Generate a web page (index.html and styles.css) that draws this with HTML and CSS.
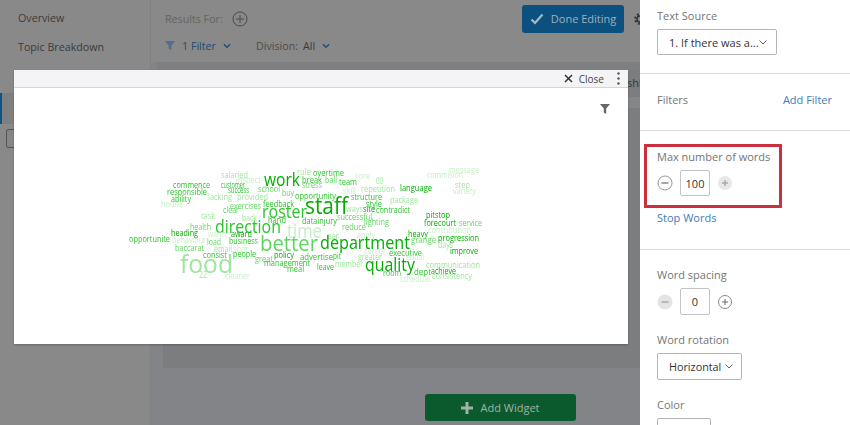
FILE: index.html
```html
<!DOCTYPE html>
<html lang="en">
<head>
<meta charset="utf-8">
<title>Word cloud widget</title>
<link rel="stylesheet" href="styles.css">
</head>
<body>
<div class="app">
  <nav class="sidebar">
    <a class="nav-item">Overview</a>
    <a class="nav-item">Topic Breakdown</a>
    <div class="nav-current"></div>
    <div class="nav-box"></div>
  </nav>
  <main class="main">
    <div class="results-row">
      <span class="results-label">Results For:</span>
      <svg class="results-add" width="16" height="16" viewBox="0 0 16 16"><circle cx="8" cy="8" r="7" fill="none" stroke="#4a4a4a"/><path d="M8 4v8M4 8h8" stroke="#4a4a4a" fill="none"/></svg>
      <button class="done-btn">
        <svg width="14" height="12" viewBox="0 0 14 12"><path d="M1.500 6.500l3.500 3.500 7.500-8.500" fill="none" stroke="#a9b9c4" stroke-width="2.200"/></svg>
        Done Editing
      </button>
      <svg class="gear" width="12" height="12" viewBox="0 0 12 12"><circle cx="6" cy="6" r="3" fill="none" stroke="#333" stroke-width="1.500"/><circle cx="6" cy="6" r="4.800" fill="none" stroke="#333" stroke-width="2" stroke-dasharray="2 1.770"/></svg>
    </div>
    <div class="filter-row">
      <svg width="10" height="9" viewBox="0 0 11 10"><path d="M0 0h11L7 5v5L4 8.500V5z" fill="#4d6f8f"/></svg>
      <span class="filter-count">1 Filter</span>
      <svg class="chev" width="8" height="6" viewBox="0 0 9 6"><path d="M1 1l3.500 3.500L8 1" fill="none" stroke="#1f4d78" stroke-width="1.500"/></svg>
      <span class="division">Division:</span>
      <span class="division-val">All</span>
      <svg class="chev" width="8" height="6" viewBox="0 0 9 6"><path d="M1 1l3.500 3.500L8 1" fill="none" stroke="#1f4d78" stroke-width="1.500"/></svg>
    </div>
    <div class="band"></div>
    <div class="card">
      <span class="card-title">shb</span>
      <div class="card-strip"></div>
    </div>
    <button class="add-btn">
      <svg width="12" height="12" viewBox="0 0 12 12"><path d="M6 0v12M0 6h12" stroke="#9db3a5" stroke-width="3"/></svg>
      Add Widget
    </button>
  </main>
  <aside class="panel">
    <section class="panel-sec sec-source">
      <label class="lbl">Text Source</label>
      <div class="select select-source"><span>1. If there was a...</span><svg width="8" height="5" viewBox="0 0 8 5"><path d="M.5.5L4 4 7.500.5" fill="none" stroke="#666"/></svg></div>
    </section>
    <section class="panel-sec sec-filters">
      <label class="lbl">Filters</label>
      <a class="link">Add Filter</a>
    </section>
    <section class="panel-sec sec-max">
      <div class="highlight">
        <label class="lbl">Max number of words</label>
        <div class="stepper">
          <svg class="step-btn" width="16" height="16" viewBox="0 0 16 16"><circle cx="8" cy="8" r="7" fill="#fff" stroke="#999"/><path d="M4.500 8h7" stroke="#888" stroke-width="1.500"/></svg>
          <div class="num">100</div>
          <svg class="step-btn" width="14" height="14" viewBox="0 0 14 14"><circle cx="7" cy="7" r="7" fill="#e8e8e8"/><path d="M7 4v6M4 7h6" stroke="#aaa" stroke-width="1.500"/></svg>
        </div>
      </div>
      <a class="link stop">Stop Words</a>
    </section>
    <section class="panel-sec sec-style">
      <label class="lbl">Word spacing</label>
      <div class="stepper">
        <svg class="step-btn" width="16" height="16" viewBox="0 0 16 16"><circle cx="8" cy="8" r="7.500" fill="#e4e4e4"/><path d="M4.500 8h7" stroke="#aaa" stroke-width="1.500"/></svg>
        <div class="num">0</div>
        <svg class="step-btn" width="14" height="14" viewBox="0 0 14 14"><circle cx="7" cy="7" r="6.500" fill="#fff" stroke="#888"/><path d="M7 4v6M4 7h6" stroke="#666"/></svg>
      </div>
      <label class="lbl lbl-rot">Word rotation</label>
      <div class="select select-rot"><span>Horizontal</span><svg width="8" height="5" viewBox="0 0 8 5"><path d="M.5.5L4 4 7.500.5" fill="none" stroke="#666"/></svg></div>
      <label class="lbl lbl-color">Color</label>
      <div class="color-box"></div>
    </section>
  </aside>
  <div class="modal">
    <header class="modal-head">
      <svg width="9" height="9" viewBox="0 0 9 9"><path d="M1 1l7 7M8 1L1 8" stroke="#333" stroke-width="1.500"/></svg>
      <span class="close-text">Close</span>
      <svg class="dots" width="3" height="13" viewBox="0 0 3 13"><circle cx="1.500" cy="1.500" r="1.200" fill="#555"/><circle cx="1.500" cy="6.500" r="1.200" fill="#555"/><circle cx="1.500" cy="11.500" r="1.200" fill="#555"/></svg>
    </header>
    <div class="modal-body">
      <svg class="funnel" width="10" height="10" viewBox="0 0 10 10"><path d="M0 0h10L6.200 4.500V10L3.800 8.500V4.500z" fill="#666"/></svg>
      <svg class="cloud" width="614" height="256" viewBox="14 88 614 256" font-size="8.500">
        <text class="w4" x="221" y="178" textLength="27" lengthAdjust="spacingAndGlyphs">salaried</text>
        <text class="w5" x="236" y="183" textLength="25" lengthAdjust="spacingAndGlyphs">inspect</text>
        <text class="w1" x="264" y="186" font-size="18" textLength="36" lengthAdjust="spacingAndGlyphs">work</text>
        <text class="w4" x="297" y="175" textLength="14" lengthAdjust="spacingAndGlyphs">rule</text>
        <text class="w2" x="173" y="188" textLength="37" lengthAdjust="spacingAndGlyphs">commence</text>
        <text class="w2" x="221" y="188" textLength="24" lengthAdjust="spacingAndGlyphs">customer</text>
        <text class="w2" x="228" y="193" textLength="21" lengthAdjust="spacingAndGlyphs">success</text>
        <text class="w3" x="258" y="192" textLength="22" lengthAdjust="spacingAndGlyphs">school</text>
        <text class="w2" x="167" y="195" textLength="40" lengthAdjust="spacingAndGlyphs">responsible</text>
        <text class="w4" x="208" y="200" textLength="24" lengthAdjust="spacingAndGlyphs">lacking</text>
        <text class="w4" x="237" y="200" textLength="31" lengthAdjust="spacingAndGlyphs">provided</text>
        <text class="w3" x="282" y="196" textLength="12" lengthAdjust="spacingAndGlyphs">buy</text>
        <text class="w2" x="171" y="202" textLength="20" lengthAdjust="spacingAndGlyphs">ability</text>
        <text class="w5" x="161" y="207" textLength="21" lengthAdjust="spacingAndGlyphs">house</text>
        <text class="w3" x="230" y="209" textLength="31" lengthAdjust="spacingAndGlyphs">exercises</text>
        <text class="w2" x="263" y="207" textLength="31" lengthAdjust="spacingAndGlyphs">feedback</text>
        <text class="w3" x="223" y="213" textLength="16" lengthAdjust="spacingAndGlyphs">clear</text>
        <text class="w2" x="262" y="218" font-size="18" textLength="45" lengthAdjust="spacingAndGlyphs">roster</text>
        <text class="w4" x="201" y="219" textLength="14" lengthAdjust="spacingAndGlyphs">task</text>
        <text class="w4" x="242" y="221" textLength="15" lengthAdjust="spacingAndGlyphs">back</text>
        <text class="w2" x="268" y="223" textLength="18" lengthAdjust="spacingAndGlyphs">hand</text>
        <text class="w2" x="215" y="233" font-size="18" textLength="66" lengthAdjust="spacingAndGlyphs">direction</text>
        <text class="w3" x="190" y="230" textLength="21" lengthAdjust="spacingAndGlyphs">health</text>
        <text class="w1" x="171" y="236" textLength="27" lengthAdjust="spacingAndGlyphs">heading</text>
        <text class="w1" x="231" y="237" textLength="21" lengthAdjust="spacingAndGlyphs">award</text>
        <text class="w5" x="287" y="238" font-size="20" textLength="35" lengthAdjust="spacingAndGlyphs">time</text>
        <text class="w2" x="129" y="242" textLength="41" lengthAdjust="spacingAndGlyphs">opportunite</text>
        <text class="w5" x="172" y="243" textLength="34" lengthAdjust="spacingAndGlyphs">behaviour</text>
        <text class="w5" x="208" y="237" textLength="18" lengthAdjust="spacingAndGlyphs">warm</text>
        <text class="w3" x="207" y="245" textLength="14" lengthAdjust="spacingAndGlyphs">load</text>
        <text class="w2" x="229" y="244" textLength="29" lengthAdjust="spacingAndGlyphs">business</text>
        <text class="w3" x="260" y="251" font-size="22" textLength="58" lengthAdjust="spacingAndGlyphs">better</text>
        <text class="w3" x="175" y="251" textLength="29" lengthAdjust="spacingAndGlyphs">baccarat</text>
        <text class="w4" x="214" y="252" textLength="18" lengthAdjust="spacingAndGlyphs">email</text>
        <text class="w5" x="233" y="252" textLength="15" lengthAdjust="spacingAndGlyphs">shift</text>
        <text class="w4" x="180" y="273" font-size="25" textLength="53" lengthAdjust="spacingAndGlyphs">food</text>
        <text class="w2" x="203" y="258" textLength="24" lengthAdjust="spacingAndGlyphs">consist</text>
        <text class="w2" x="233" y="257" textLength="23" lengthAdjust="spacingAndGlyphs">people</text>
        <text class="w3" x="255" y="262" textLength="18" lengthAdjust="spacingAndGlyphs">great</text>
        <text class="w1" x="274" y="258" textLength="20" lengthAdjust="spacingAndGlyphs">policy</text>
        <text class="w2" x="300" y="260" textLength="33" lengthAdjust="spacingAndGlyphs">advertise</text>
        <text class="w2" x="264" y="266" textLength="46" lengthAdjust="spacingAndGlyphs">management</text>
        <text class="w2" x="287" y="272" textLength="17" lengthAdjust="spacingAndGlyphs">meal</text>
        <text class="w4" x="199" y="278" textLength="8" lengthAdjust="spacingAndGlyphs">22</text>
        <text class="w5" x="225" y="279" textLength="25" lengthAdjust="spacingAndGlyphs">cleaner</text>
        <text class="w2" x="313" y="176" textLength="31" lengthAdjust="spacingAndGlyphs">overtime</text>
        <text class="w5" x="449" y="173" textLength="30" lengthAdjust="spacingAndGlyphs">message</text>
        <text class="w5" x="427" y="178" textLength="36" lengthAdjust="spacingAndGlyphs">commision</text>
        <text class="w5" x="355" y="179" textLength="15" lengthAdjust="spacingAndGlyphs">sore</text>
        <text class="w4" x="376" y="184" textLength="7" lengthAdjust="spacingAndGlyphs">00</text>
        <text class="w2" x="302" y="183" textLength="20" lengthAdjust="spacingAndGlyphs">break</text>
        <text class="w3" x="325" y="183" textLength="12" lengthAdjust="spacingAndGlyphs">ball</text>
        <text class="w2" x="339" y="185" textLength="18" lengthAdjust="spacingAndGlyphs">team</text>
        <text class="w3" x="302" y="188" textLength="20" lengthAdjust="spacingAndGlyphs">stress</text>
        <text class="w4" x="455" y="188" textLength="15" lengthAdjust="spacingAndGlyphs">step</text>
        <text class="w4" x="361" y="192" textLength="34" lengthAdjust="spacingAndGlyphs">repetition</text>
        <text class="w1" x="400" y="191" textLength="32" lengthAdjust="spacingAndGlyphs">language</text>
        <text class="w5" x="453" y="194" textLength="23" lengthAdjust="spacingAndGlyphs">variety</text>
        <text class="w5" x="343" y="194" textLength="13" lengthAdjust="spacingAndGlyphs">skill</text>
        <text class="w2" x="295" y="199" textLength="41" lengthAdjust="spacingAndGlyphs">opportunity</text>
        <text class="w2" x="351" y="200" textLength="31" lengthAdjust="spacingAndGlyphs">structure</text>
        <text class="w4" x="390" y="203" textLength="28" lengthAdjust="spacingAndGlyphs">package</text>
        <text class="w2" x="366" y="207" textLength="16" lengthAdjust="spacingAndGlyphs">style</text>
        <text class="w1" x="305" y="214" font-size="23" textLength="43" lengthAdjust="spacingAndGlyphs">staff</text>
        <text class="w4" x="346" y="212" textLength="17" lengthAdjust="spacingAndGlyphs">ways</text>
        <text class="w1" x="363" y="212" textLength="12" lengthAdjust="spacingAndGlyphs">site</text>
        <text class="w2" x="376" y="213" textLength="34" lengthAdjust="spacingAndGlyphs">contradict</text>
        <text class="w1" x="426" y="218" textLength="24" lengthAdjust="spacingAndGlyphs">pitstop</text>
        <text class="w3" x="337" y="220" textLength="35" lengthAdjust="spacingAndGlyphs">successful</text>
        <text class="w2" x="302" y="224" textLength="35" lengthAdjust="spacingAndGlyphs">datainjury</text>
        <text class="w3" x="364" y="225" textLength="25" lengthAdjust="spacingAndGlyphs">lighting</text>
        <text class="w1" x="424" y="226" textLength="32" lengthAdjust="spacingAndGlyphs">forecourt</text>
        <text class="w3" x="459" y="226" textLength="23" lengthAdjust="spacingAndGlyphs">service</text>
        <text class="w3" x="342" y="230" textLength="24" lengthAdjust="spacingAndGlyphs">reduce</text>
        <text class="w5" x="428" y="233" textLength="43" lengthAdjust="spacingAndGlyphs">contribution</text>
        <text class="w1" x="408" y="237" textLength="20" lengthAdjust="spacingAndGlyphs">heavy</text>
        <text class="w5" x="357" y="238" textLength="18" lengthAdjust="spacingAndGlyphs">apply</text>
        <text class="w4" x="327" y="239" textLength="12" lengthAdjust="spacingAndGlyphs">ear</text>
        <text class="w1" x="438" y="241" textLength="41" lengthAdjust="spacingAndGlyphs">progression</text>
        <text class="w3" x="411" y="243" textLength="25" lengthAdjust="spacingAndGlyphs">grange</text>
        <text class="w1" x="320" y="249" font-size="18" textLength="90" lengthAdjust="spacingAndGlyphs">department</text>
        <text class="w4" x="438" y="248" textLength="15" lengthAdjust="spacingAndGlyphs">days</text>
        <text class="w1" x="450" y="254" textLength="28" lengthAdjust="spacingAndGlyphs">improve</text>
        <text class="w5" x="364" y="254" textLength="22" lengthAdjust="spacingAndGlyphs">career</text>
        <text class="w2" x="389" y="256" textLength="33" lengthAdjust="spacingAndGlyphs">executive</text>
        <text class="w5" x="406" y="260" textLength="18" lengthAdjust="spacingAndGlyphs">equal</text>
        <text class="w4" x="358" y="260" textLength="24" lengthAdjust="spacingAndGlyphs">greater</text>
        <text class="w2" x="333" y="259" textLength="8" lengthAdjust="spacingAndGlyphs">pit</text>
        <text class="w4" x="335" y="267" textLength="28" lengthAdjust="spacingAndGlyphs">member</text>
        <text class="w4" x="426" y="268" textLength="54" lengthAdjust="spacingAndGlyphs">communication</text>
        <text class="w2" x="317" y="270" textLength="17" lengthAdjust="spacingAndGlyphs">leave</text>
        <text class="w1" x="365" y="271" font-size="18" textLength="50" lengthAdjust="spacingAndGlyphs">quality</text>
        <text class="w1" x="431" y="274" textLength="25" lengthAdjust="spacingAndGlyphs">achieve</text>
        <text class="w2" x="414" y="275" textLength="17" lengthAdjust="spacingAndGlyphs">dept</text>
        <text class="w2" x="383" y="276" textLength="18" lengthAdjust="spacingAndGlyphs">room</text>
        <text class="w4" x="432" y="279" textLength="40" lengthAdjust="spacingAndGlyphs">consistency</text>
        <text class="w5" x="400" y="282" textLength="30" lengthAdjust="spacingAndGlyphs">schedule</text>
      </svg>
    </div>
  </div>
</div>
</body>
</html>
```
FILE: styles.css
```css
* { box-sizing: border-box; }
html, body { margin: 0; padding: 0; }
body {
  width: 850px;
  height: 425px;
  overflow: hidden;
  font-family: "Open Sans", "Liberation Sans", sans-serif;
  font-size: 11px;
  background: #838488;
}
.app { position: relative; display: flex; width: 850px; height: 425px; overflow: hidden; }

/* Sidebar */
.sidebar {
  width: 151px;
  flex: none;
  background: #898989;
  border-right: 1px solid #808082;
  display: flex;
  flex-direction: column;
  padding-top: 10px;
}
.nav-item { height: 29px; line-height: 17px; padding-left: 18px; font-size: 10.7px; color: #3b3b3b; }
.nav-current { width: 14px; height: 31px; margin-top: 25px; background: #7f7f7f; border-left: 2px solid #0c5487; }
.nav-box { width: 20px; height: 19px; margin: 5px 0 0 6px; border: 1px solid #555; border-radius: 2px; background: #868686; }

/* Main */
.main { width: 489px; flex: none; display: flex; flex-direction: column; background: #838488; }
.results-row { display: flex; align-items: center; height: 37px; padding: 0 0 0 14px; background: #898989; }
.results-label { font-size: 10.7px; color: #636363; }
.results-add { margin-left: 9px; }
.done-btn {
  margin-left: auto;
  margin-right: 10px;
  width: 102px;
  height: 28px;
  display: flex;
  align-items: center;
  justify-content: center;
  gap: 7px;
  padding: 0;
  border: 0;
  border-radius: 3px;
  background: #0c5080;
  color: #9fb0bc;
  font: 400 11px "Open Sans", sans-serif;
}
.gear { flex: none; margin-right: -6px; }
.filter-row { display: flex; align-items: center; height: 25px; padding: 0 0 8px 14px; background: #898989; font-size: 10.7px; }
.filter-count { margin-left: 7px; color: #204c76; }
.filter-row .chev { margin-left: 7px; }
.division { margin-left: 25px; color: #4c4c4c; }
.division-val { margin-left: 5px; color: #3b3b3b; }
.band { height: 8px; margin-left: 6px; background: #7e7f80; }
.card { height: 298px; margin-left: 12px; background: #7c7d7f; overflow: hidden; }
.card-title { display: block; height: 27px; padding: 5px 0 0 464px; font-size: 11px; line-height: 15px; color: #333; }
.card-strip { height: 11px; background: #85868a; }
.add-btn {
  align-self: flex-start;
  width: 151px;
  height: 27px;
  margin: 26px 0 0 274px;
  display: flex;
  align-items: center;
  justify-content: center;
  gap: 7px;
  padding: 0;
  border: 0;
  border-radius: 3px;
  background: #0b5a2d;
  color: #a0b3a7;
  font: 400 11px "Open Sans", sans-serif;
}

/* Right panel */
.panel { flex: 1; background: #fff; color: #6f6f6f; }
.panel-sec { padding-left: 17px; padding-right: 18px; border-bottom: 1px solid #dcdcdc; }
.lbl { display: block; font-size: 11px; line-height: 15px; color: #757575; }
.link { color: #3d7db8; font-size: 11px; line-height: 15px; }
.sec-source { height: 74px; padding-top: 8px; }
.select {
  display: flex;
  align-items: center;
  justify-content: space-between;
  background: #fff;
  border: 1px solid #b5b5b5;
  border-radius: 2px;
  color: #333;
  font-size: 11px;
  white-space: nowrap;
}
.select-source { width: 120px; height: 26px; margin-top: 6px; padding: 0 9px 0 11px; }
.sec-filters { height: 57px; padding-bottom: 5px; display: flex; justify-content: space-between; align-items: center; }
.sec-max { height: 119px; padding-left: 4px; padding-top: 13px; }
.highlight { width: 138px; height: 64px; padding: 2px 0 0 10px; border: 3px solid #c9303e; }
.stepper { display: flex; align-items: center; margin-top: 6px; }
.step-btn { flex: none; }
.num {
  width: 30px;
  height: 26px;
  margin: 0 8px 0 7px;
  border: 1px solid #c4c4c4;
  border-radius: 2px;
  display: flex;
  align-items: center;
  justify-content: center;
  color: #333;
  font-size: 11px;
}
.stop { display: block; margin: 2px 0 0 13px; }
.sec-style { border-bottom: 0; padding-top: 17px; }
.sec-style .num { height: 27px; }
.lbl-rot { margin-top: 17px; }
.select-rot { width: 85px; height: 27px; margin-top: 6px; padding: 0 8px 0 11px; font-size: 10.8px; }
.lbl-color { margin-top: 17px; }
.color-box { width: 54px; height: 20px; margin-top: 6px; border: 1px solid #b5b5b5; border-radius: 2px; }

/* Modal */
.modal {
  position: absolute;
  left: 14px;
  top: 70px;
  width: 614px;
  height: 274px;
  background: #fff;
  box-shadow: 0 1px 2px rgba(0, 0, 0, .25);
}
.modal-head {
  height: 18px;
  display: flex;
  align-items: center;
  justify-content: flex-end;
  background: #f4f4f6;
  border-bottom: 1px solid #d6d6d6;
  padding-right: 8px;
}
.close-text { margin: 0 13px 0 6px; font-size: 10px; color: #444; }
.modal-body { position: relative; height: 256px; }
.funnel { position: absolute; right: 18px; top: 16px; }
.cloud { position: absolute; left: 0; top: 0; filter: blur(.25px); }
.cloud text { font-family: "Open Sans", sans-serif; }
.w1 { fill: #00ad00; }
.w2 { fill: #2cc42c; }
.w3 { fill: #5fd65f; }
.w4 { fill: #9ee59e; }
.w5 { fill: #c6efc6; }
```
